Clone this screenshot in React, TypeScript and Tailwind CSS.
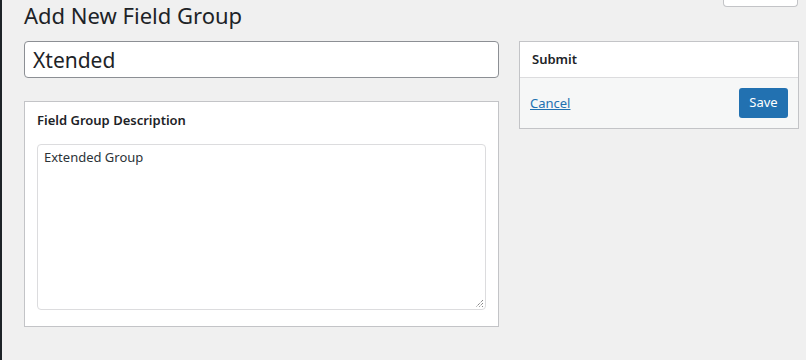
import React from "react";

export default function App() {
  return (
    <div className="w-[806px] h-[360px] bg-[#f0f0f0] flex overflow-hidden text-[#1d2327]" style={{ fontFamily: '"Noto Sans", "Open Sans", sans-serif' }}>
      <div className="w-[2px] bg-[#1d2327] shrink-0" />
      <div className="flex-1 relative pl-[22px] pr-[7px]">
        <div className="absolute right-[8px] top-0 w-[75px] h-[7px] bg-white border border-t-0 border-[#c3c4c7] rounded-b-[4px]" />
        <h1 className="text-[22px] leading-[30px] font-normal h-[41px] pt-[0px]">Add New Field Group</h1>
        <div className="flex gap-[20px] items-start">
          <div className="w-[475px] shrink-0 flex flex-col">
            <div className="h-[37px] border border-[#8c8f94] rounded-[4px] bg-white flex items-center px-[8px] text-[21px] leading-none">
              <span className="mt-[1px]">Xtended</span>
            </div>
            <div className="mt-[23px] h-[226px] bg-white border border-[#c3c4c7] flex flex-col px-[12px]">
              <div className="text-[13px] leading-[18px] font-semibold h-[42px] pt-[9px] text-[#1d2327]">Field Group Description</div>
              <div className="h-[166px] border border-[#dcdcde] rounded-[4px] relative px-[6px] pt-[2px] text-[13px] leading-[20px] text-[#2c3338]">
                Extended Group
                <svg className="absolute right-[1px] bottom-[1px]" width="9" height="9" viewBox="0 0 9 9">
                  <path d="M8 1L1 8M8 4L4 8M8 7L7 8" stroke="#555" strokeWidth="1" strokeDasharray="1 1" />
                </svg>
              </div>
            </div>
          </div>
          <div className="w-[280px] shrink-0 bg-white border border-[#c3c4c7] flex flex-col">
            <div className="h-[36px] border-b border-[#dcdcde] flex items-center px-[12px] text-[13px] font-semibold pt-[1px]">Submit</div>
            <div className="h-[50px] bg-[#f6f7f7] flex items-center justify-between pl-[10px] pr-[10px]">
              <a className="text-[13px] text-[#2271b1] underline pt-[1px]">Cancel</a>
              <button className="w-[49px] h-[30px] bg-[#2271b1] text-white text-[13px] rounded-[3px]">Save</button>
            </div>
          </div>
        </div>
      </div>
    </div>
  );
}
